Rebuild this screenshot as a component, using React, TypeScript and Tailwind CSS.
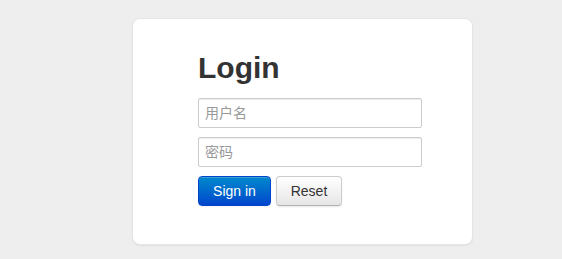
export default function App() {
  return (
    <div className="min-h-[259px] bg-[#eeeeee] pt-[18px] pl-[132px] font-['Liberation_Sans','Noto_Sans_CJK_SC',sans-serif]">
      <form
        className="w-[341px] h-[227px] bg-white border border-[#e5e5e5] rounded-[8px] shadow-[0_1px_2px_rgba(0,0,0,0.06)] pt-[29px] pl-[65px]"
        onSubmit={(e) => e.preventDefault()}
      >
        <h2 className="text-[30px] leading-[40px] font-bold text-[#333333] mb-[10px]">Login</h2>
        <input
          type="text"
          placeholder="用户名"
          className="block w-[224px] h-[30px] mb-[9px] px-[6px] text-[14px] text-[#555555] border border-[#cccccc] rounded-[2px] shadow-[inset_0_1px_1px_rgba(0,0,0,0.075)] placeholder:text-[#999999] outline-none"
        />
        <input
          type="password"
          placeholder="密码"
          className="block w-[224px] h-[30px] mb-[9px] px-[6px] text-[14px] text-[#555555] border border-[#cccccc] rounded-[2px] shadow-[inset_0_1px_1px_rgba(0,0,0,0.075)] placeholder:text-[#999999] outline-none"
        />
        <div className="flex gap-[5px]">
          <button
            type="submit"
            className="h-[30px] w-[73px] text-[14px] text-white rounded-[4px] border border-[#0044cc] bg-gradient-to-b from-[#0088cc] to-[#0044cc] shadow-[inset_0_1px_0_rgba(255,255,255,0.2),0_1px_2px_rgba(0,0,0,0.05)]"
          >
            Sign in
          </button>
          <button
            type="reset"
            className="h-[30px] w-[66px] text-[14px] text-[#333333] rounded-[4px] border border-[#cccccc] border-b-[#b3b3b3] bg-gradient-to-b from-white to-[#e6e6e6] shadow-[inset_0_1px_0_rgba(255,255,255,0.2),0_1px_2px_rgba(0,0,0,0.1)]"
          >
            Reset
          </button>
        </div>
      </form>
    </div>
  );
}
